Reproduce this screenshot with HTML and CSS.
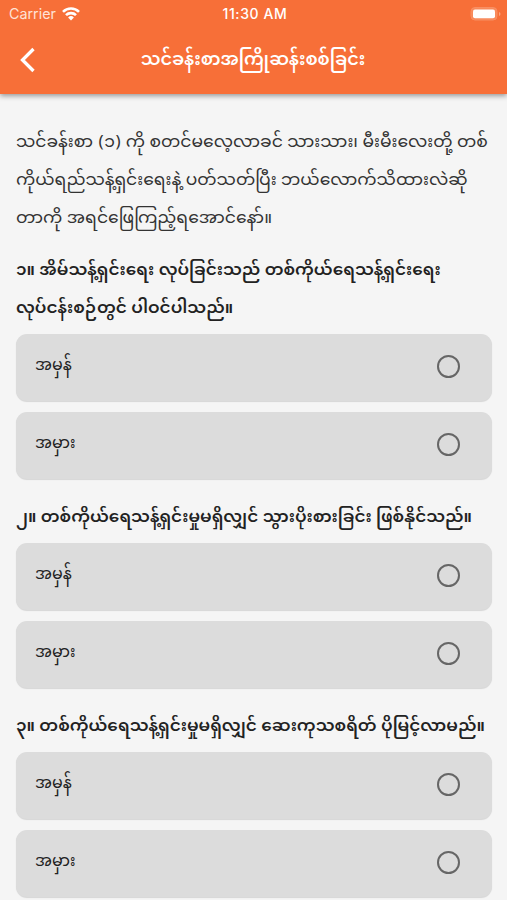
FILE: index.html
```html
<!DOCTYPE html>
<html lang="my">
<head>
<meta charset="utf-8">
<title>သင်ခန်းစာအကြိုဆန်းစစ်ခြင်း</title>
<link rel="stylesheet" href="styles.css">
</head>
<body>
<header class="top">
  <div class="status">
    <div class="carrier"><span>Carrier</span>
      <svg width="18" height="14" viewBox="0 0 18 14" fill="none" stroke="#fff" stroke-width="2.6"><path d="M1 4.8a11.3 11.3 0 0 1 16 0M4 8.2a7 7 0 0 1 10 0"/><path d="M9 13.5l-2.9-3a4.1 4.1 0 0 1 5.8 0z" fill="#fff" stroke="none"/></svg>
    </div>
    <span class="time">11:30 AM</span>
    <svg class="battery" width="32" height="16" viewBox="0 0 32 16"><rect x="2" y="1.5" width="26" height="12.5" rx="4" fill="#f88a5b" stroke="#f88f63"/><rect x="4" y="3.5" width="22" height="8.8" rx="2" fill="#fff"/><path d="M30 6v4q1.5-.6 1.5-2T30 6z" fill="#f8a681"/></svg>
  </div>
  <div class="bar">
    <svg class="back" width="16" height="26" viewBox="0 0 16 26" fill="none" stroke="#fff" stroke-width="3.3"><path d="M13.5 2L2.5 13l11 11"/></svg>
    <h1><span>သင်ခန်းစာအကြိုဆန်းစစ်ခြင်း</span></h1>
  </div>
</header>
<main>
  <p class="intro"><span>သင်ခန်းစာ <b>(၁)</b> ကို စတင်မလေ့လာခင် သားသား၊ မီးမီးလေးတို့ တစ်</span><span>ကိုယ်ရည်သန့်ရှင်းရေးနဲ့ ပတ်သတ်ပြီး ဘယ်လောက်သိထားလဲဆို</span><span>တာကို အရင်ဖြေကြည့်ရအောင်နော်။</span></p>
  <section>
    <h2><span>၁။ အိမ်သန့်ရှင်းရေး လုပ်ခြင်းသည် တစ်ကိုယ်ရေသန့်ရှင်းရေး</span><span>လုပ်ငန်းစဉ်တွင် ပါဝင်ပါသည်။</span></h2>
    <div class="option"><span>အမှန်</span><i></i></div>
    <div class="option"><span>အမှား</span><i></i></div>
  </section>
  <section>
    <h2><span>၂။ တစ်ကိုယ်ရေသန့်ရှင်းမှုမရှိလျှင် သွားပိုးစားခြင်း ဖြစ်နိုင်သည်။</span></h2>
    <div class="option"><span>အမှန်</span><i></i></div>
    <div class="option"><span>အမှား</span><i></i></div>
  </section>
  <section>
    <h2><span>၃။ တစ်ကိုယ်ရေသန့်ရှင်းမှုမရှိလျှင် ဆေးကုသစရိတ် ပိုမြင့်လာမည်။</span></h2>
    <div class="option"><span>အမှန်</span><i></i></div>
    <div class="option"><span>အမှား</span><i></i></div>
  </section>
</main>
</body>
</html>
```
FILE: styles.css
```css
* { box-sizing: border-box; }
body { margin: 0; height: 900px; overflow: hidden; background: #f5f5f5; color: #222; font-family: "Noto Sans Myanmar", "Noto Sans", sans-serif; }
.top { height: 94px; background: #f76f38; color: #fff; box-shadow: 0 2px 5px rgba(0,0,0,.38); }
.status { height: 27px; display: grid; grid-template-columns: 1fr auto 1fr; align-items: center; padding: 0 6px 0 9px; font: 14.3px/27px Inter, sans-serif; }
.carrier { display: flex; align-items: center; gap: 6px; color: #ffe2d6; }
.time { font-weight: 500; font-size: 14px; letter-spacing: .6px; }
.battery { justify-self: end; }
.bar { height: 67px; display: grid; grid-template-columns: 60px 1fr 61px; align-items: center; }
.back { margin: -2px 0 0 20px; }
h1 { margin: 0; padding-top: 1px; text-align: center; white-space: nowrap; font-size: 17.7px; font-weight: 600; line-height: 38px; }
main { padding: 30px 15px 0 16px; }
.intro { margin: 0 0 15px; font-size: 17.15px; line-height: 38px; color: #333; }
.intro span, h2 span { display: block; width: max-content; white-space: nowrap; }
.intro b { font-weight: 400; letter-spacing: .6px; margin-left: 1px; }
h2 { margin: 0 0 5px; font-size: 16.87px; font-weight: 600; line-height: 38px; }
section { margin-bottom: 21px; }
.option { height: 67px; margin-bottom: 11px; padding: 0 32px 2px 19px; display: flex; align-items: center; justify-content: space-between; border-radius: 11px; background: #dcdcdc; box-shadow: 0 1px 1px rgba(0,0,0,.13); font-size: 15.9px; line-height: 30px; }
.option i { width: 23px; height: 23px; border: 2.5px solid #666; border-radius: 50%; }
```
